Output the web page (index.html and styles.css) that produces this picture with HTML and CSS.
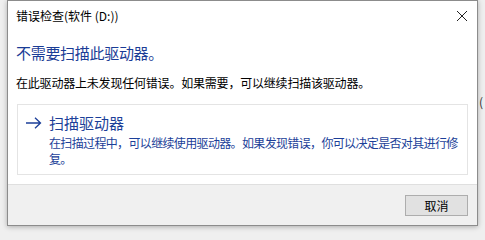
FILE: index.html
```html
<!DOCTYPE html>
<html lang="zh-CN">
<head>
<meta charset="utf-8">
<link rel="stylesheet" href="styles.css">
</head>
<body>
<div class="backdrop-text">(</div>
<div class="window">
  <div class="titlebar">
    <span class="title">错误检查(软件 (D:))</span>
    <svg class="close" width="12" height="12" viewBox="0 0 12 12"><path d="M1 1L11 11M11 1L1 11" stroke="#222" stroke-width="1" fill="none"/></svg>
  </div>
  <div class="content">
    <div class="heading">不需要扫描此驱动器。</div>
    <div class="body-text">在此驱动器上未发现任何错误。如果需要，可以继续扫描该驱动器。</div>
    <div class="cmdlink">
      <svg class="arrow" width="17" height="12" viewBox="0 0 17 12"><path d="M1 6H15.5M10 0.8L15.5 6L10 11.2" stroke="#1c3f99" stroke-width="1.3" fill="none"/></svg>
      <div class="cmd-text">
        <div class="cmd-title">扫描驱动器</div>
        <div class="cmd-desc">在扫描过程中，可以继续使用驱动器。如果发现错误，你可以决定是否对其进行修<br>复。</div>
      </div>
    </div>
  </div>
  <div class="footer">
    <button class="btn">取消</button>
  </div>
</div>
</body>
</html>
```

FILE: styles.css
```css
html, body {
  margin: 0;
  padding: 0;
}
body {
  width: 485px;
  height: 233px;
  overflow: hidden;
  background: #efefef;
  font-family: "Noto Sans CJK SC", "Noto Sans", sans-serif;
  position: relative;
}
.backdrop-text {
  position: absolute;
  left: 479px;
  top: 94px;
  font-size: 12px;
  line-height: 16px;
  color: #333;
}
.window {
  position: relative;
  margin-left: 7px;
  width: 471px;
  height: 226px;
  box-sizing: border-box;
  border: 1px solid #8c8c8c;
  background: #ffffff;
  box-shadow: 0 1px 5px rgba(0, 0, 0, 0.28);
  display: flex;
  flex-direction: column;
}
.titlebar {
  height: 29px;
  display: flex;
  align-items: center;
  justify-content: space-between;
  padding: 0 9px 0 8px;
}
.title {
  font-size: 12px;
  line-height: 16px;
  color: #000;
}
.close {
  display: block;
}
.content {
  padding: 0 0 0 8px;
  height: 154px;
  box-sizing: border-box;
}
.heading {
  margin-top: 13px;
  font-size: 15px;
  line-height: 20px;
  letter-spacing: -0.3px;
  color: #1a3c96;
}
.body-text {
  margin-top: 12px;
  font-size: 12px;
  line-height: 16px;
  letter-spacing: -0.2px;
  color: #000;
}
.cmdlink {
  margin-top: 13px;
  margin-left: 1px;
  width: 451px;
  box-sizing: border-box;
  border: 1px solid #e4e4e4;
  padding: 8px 0 7px 7px;
  display: flex;
  align-items: flex-start;
}
.arrow {
  display: block;
  margin-top: 4px;
  margin-right: 7px;
  flex: none;
}
.cmd-text {
  flex: 1;
  min-width: 0;
}
.cmd-title {
  font-size: 15px;
  line-height: 20px;
  margin-bottom: 2px;
  color: #1c3f99;
}
.cmd-desc {
  font-size: 12px;
  line-height: 16px;
  letter-spacing: -0.65px;
  white-space: nowrap;
  color: #1c3f99;
}
.footer {
  flex: 1;
  background: #f0f0f0;
  border-top: 1px solid #dfdfdf;
  display: flex;
  justify-content: flex-end;
  align-items: flex-start;
  padding: 10px 9px 0 0;
}
.btn {
  width: 63px;
  height: 21px;
  box-sizing: border-box;
  border: 1px solid #adadad;
  background: #e1e1e1;
  font-family: "Noto Sans CJK SC", sans-serif;
  font-size: 12px;
  line-height: 17px;
  color: #000;
  padding: 0;
  margin: 0;
}
```
